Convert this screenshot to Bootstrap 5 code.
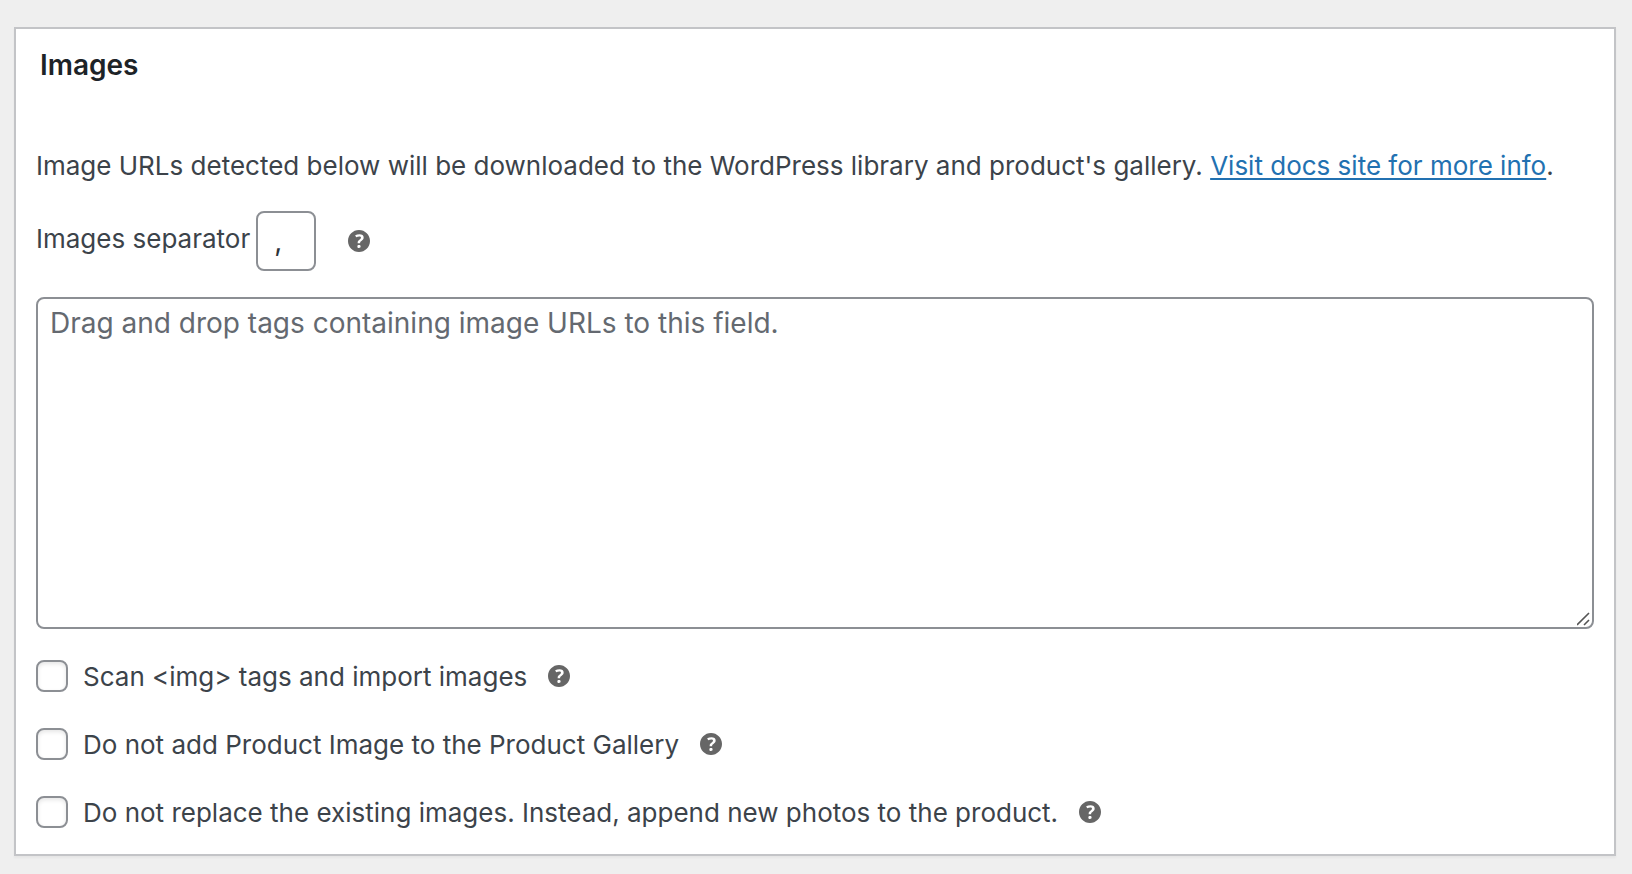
<!DOCTYPE html>
<html lang="en">
<head>
<meta charset="utf-8">
<meta name="viewport" content="width=device-width, initial-scale=1">
<title>Images</title>
<link href="https://cdn.jsdelivr.net/npm/bootstrap@5.3.0/dist/css/bootstrap.min.css" rel="stylesheet">
<style>
  body { background: #efefef; color: #3c434a; font-family: Inter, "Liberation Sans", sans-serif; font-size: 26px; line-height: 40px; }
  .postbox { margin: 27px 16px 18px 14px; border: 2px solid #c3c4c7; border-radius: 0; padding: 16px 20px 20px; color: inherit; box-shadow: 0 2px 2px rgba(0,0,0,.04); }
  .postbox h2 { margin: 0 0 61px 4px; font-size: 28px; line-height: 40px; font-weight: 600; color: #1d2327; }
  .postbox p { margin: 0 0 25px; }
  .postbox a { color: #2271b1; text-underline-offset: 3px; text-decoration-thickness: 2px; }
  .wp-field { border: 2px solid #8c8f94; border-radius: 8px; color: #2c3338; background: #fff; font-size: 28px; }
  .separator-row { gap: 6px; margin-bottom: 26px; }
  .separator-row label { padding-bottom: 4px; }
  .separator-field { width: 60px; height: 60px; padding: 0 16px; }
  .urls-field { height: 332px; padding: 4px 12px; line-height: 40px; margin-bottom: 25px; resize: vertical; }
  .urls-field::placeholder { color: #646970; opacity: 1; }
  .urls-field::-webkit-resizer { background: url("data:image/svg+xml,%3Csvg xmlns='http://www.w3.org/2000/svg' width='15' height='15'%3E%3Cpath d='M0 13L12 1M7 13L12 8' stroke='%23555' stroke-width='1.6' fill='none'/%3E%3C/svg%3E") no-repeat 0 0; }
  .option-list { gap: 24px; }
  .option-row { min-height: 44px; }
  .option-row label { padding-top: 2px; }
  .option-row .form-check-input { width: 32px; height: 32px; flex-shrink: 0; margin: 0 15px 0 0; border: 2px solid #8c8f94; border-radius: 8px; box-shadow: inset 0 2px 4px rgba(0,0,0,.1); }
  .help-tip { width: 22px; height: 22px; flex-shrink: 0; margin-left: 21px; padding: 0; border: 0; background: none; color: #666; line-height: 0; }
  .separator-row .help-tip { margin-left: 26px; }
</style>
</head>
<body>
<svg class="d-none" aria-hidden="true">
  <symbol id="help" viewBox="3 3 14 14"><path fill="currentColor" d="M17 10c0-3.87-3.14-7-7-7-3.87 0-7 3.13-7 7s3.13 7 7 7c3.86 0 7-3.13 7-7zm-6.3 1.48H9.14v-.43c0-.38.08-.7.24-.98s.46-.57.88-.89c.41-.29.68-.53.81-.71.14-.18.2-.39.2-.62 0-.25-.09-.44-.28-.58-.19-.13-.45-.19-.79-.19-.58 0-1.25.19-2 .57l-.64-1.28c.87-.49 1.8-.74 2.77-.74.81 0 1.45.2 1.92.58.48.39.71.91.71 1.55 0 .43-.09.8-.29 1.11-.19.32-.57.67-1.11 1.06-.38.28-.61.49-.71.63-.1.15-.15.34-.15.57v.35zm-1.47 2.74c-.18-.17-.27-.42-.27-.73 0-.33.08-.58.26-.75s.43-.25.77-.25c.32 0 .57.09.75.26s.27.42.27.74c0 .3-.09.55-.27.72-.18.18-.43.27-.75.27-.33 0-.58-.09-.76-.26z"/></symbol>
</svg>
<main class="card postbox">
  <h2>Images</h2>
  <p>Image URLs detected below will be downloaded to the WordPress library and product's gallery. <a href="#">Visit docs site for more info</a>.</p>
  <div class="d-flex align-items-center separator-row">
    <label for="separator">Images separator</label>
    <input id="separator" class="wp-field separator-field" type="text" value=",">
    <button type="button" class="help-tip" aria-label="Help"><svg width="22" height="22"><use href="#help"/></svg></button>
  </div>
  <textarea class="wp-field urls-field w-100 d-block" aria-label="Image URLs" placeholder="Drag and drop tags containing image URLs to this field."></textarea>
  <div class="d-flex flex-column option-list">
    <div class="d-flex align-items-center option-row">
      <input class="form-check-input" type="checkbox" id="scan"><label for="scan">Scan &lt;img&gt; tags and import images</label>
      <button type="button" class="help-tip" aria-label="Help"><svg width="22" height="22"><use href="#help"/></svg></button>
    </div>
    <div class="d-flex align-items-center option-row">
      <input class="form-check-input" type="checkbox" id="gallery"><label for="gallery">Do not add Product Image to the Product Gallery</label>
      <button type="button" class="help-tip" aria-label="Help"><svg width="22" height="22"><use href="#help"/></svg></button>
    </div>
    <div class="d-flex align-items-center option-row">
      <input class="form-check-input" type="checkbox" id="append"><label for="append">Do not replace the existing images. Instead, append new photos to the product.</label>
      <button type="button" class="help-tip" aria-label="Help"><svg width="22" height="22"><use href="#help"/></svg></button>
    </div>
  </div>
</main>
<script src="https://cdn.jsdelivr.net/npm/bootstrap@5.3.0/dist/js/bootstrap.bundle.min.js"></script>
</body>
</html>
